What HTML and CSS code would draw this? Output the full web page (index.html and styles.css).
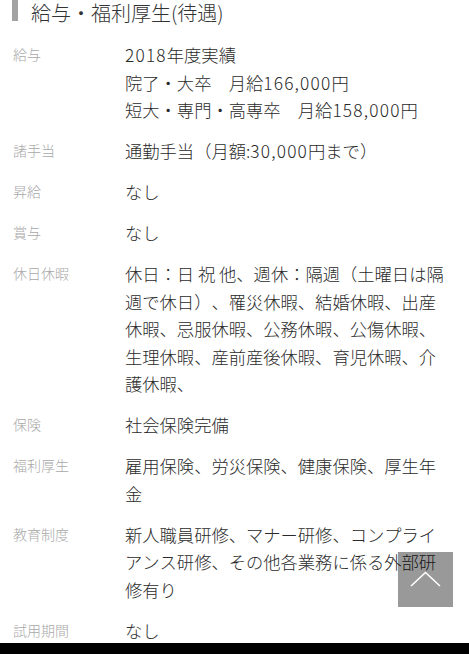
FILE: index.html
```html
<!DOCTYPE html>
<html lang="ja">
<head>
<meta charset="utf-8">
<title>給与・福利厚生(待遇)</title>
<link rel="stylesheet" href="styles.css">
</head>
<body>
<div class="page">
  <h2 class="section-title"><span class="bar"></span><span class="title-text">給与・福利厚生(待遇)</span></h2>
  <dl class="details">
    <div class="row"><dt>給与</dt><dd><span class="num">2018</span>年度実績<br>院了・大卒　月給<span class="num">166,000</span>円<br>短大・専門・高専卒　月給<span class="num">158,000</span>円</dd></div>
    <div class="row"><dt>諸手当</dt><dd>通勤手当（月額:<span class="num">30,000</span>円まで）</dd></div>
    <div class="row"><dt>昇給</dt><dd>なし</dd></div>
    <div class="row"><dt>賞与</dt><dd>なし</dd></div>
    <div class="row"><dt>休日休暇</dt><dd>休日：日 祝 他、週休：隔週（土曜日は隔週で休日）、罹災休暇、結婚休暇、出産休暇、忌服休暇、公務休暇、公傷休暇、生理休暇、産前産後休暇、育児休暇、介護休暇、</dd></div>
    <div class="row"><dt>保険</dt><dd>社会保険完備</dd></div>
    <div class="row"><dt>福利厚生</dt><dd>雇用保険、労災保険、健康保険、厚生年金</dd></div>
    <div class="row"><dt>教育制度</dt><dd>新人職員研修、マナー研修、コンプライアンス研修、その他各業務に係る外部研修有り</dd></div>
    <div class="row"><dt>試用期間</dt><dd>なし</dd></div>
  </dl>
  <div class="bottom-bar"></div>
</div>
<a class="to-top" href="#" aria-label="ページトップへ">
  <svg width="55" height="55" viewBox="0 0 55 55"><polyline points="13,34 27.5,20.5 42,34" fill="none" stroke="#fff" stroke-width="1.6"/></svg>
</a>
</body>
</html>
```

FILE: styles.css
```css
html, body {
  margin: 0;
  padding: 0;
  background: #fff;
  overflow: hidden;
}
body {
  font-family: "Noto Sans CJK JP", "Noto Sans", sans-serif;
  font-weight: 300;
  color: #2a2a2a;
  text-spacing-trim: space-all;
  font-kerning: none;
}
.page {
  display: flex;
  flex-direction: column;
}
.section-title {
  display: flex;
  align-items: flex-start;
  margin: 0;
  padding-left: 12px;
  height: 25px;
  font-weight: 300;
}
.bar {
  width: 6px;
  height: 21px;
  background: #a3a3a3;
  flex: none;
}
.title-text {
  margin-left: 13px;
  font-size: 20px;
  line-height: 25px;
  color: #333;
}
.details {
  margin: 16px 0 0 0;
  padding: 0 0 0 13px;
  display: flex;
  flex-direction: column;
  gap: 13.5px;
}
.row {
  display: grid;
  grid-template-columns: 112px 324px;
}
.row dt {
  font-size: 14px;
  line-height: 27.5px;
  color: #a8a8a8;
}
.row dd {
  margin: 0;
  font-size: 17.3px;
  line-height: 27.5px;
  color: #2a2a2a;
}
.num {
  letter-spacing: 1.2px;
}
.bottom-bar {
  margin-top: -1px;
  height: 20px;
  background: #000;
}
.to-top {
  position: fixed;
  right: 16px;
  bottom: 47px;
  width: 55px;
  height: 55px;
  background: rgba(0, 0, 0, 0.4);
  display: block;
}
.to-top svg {
  display: block;
}
```
